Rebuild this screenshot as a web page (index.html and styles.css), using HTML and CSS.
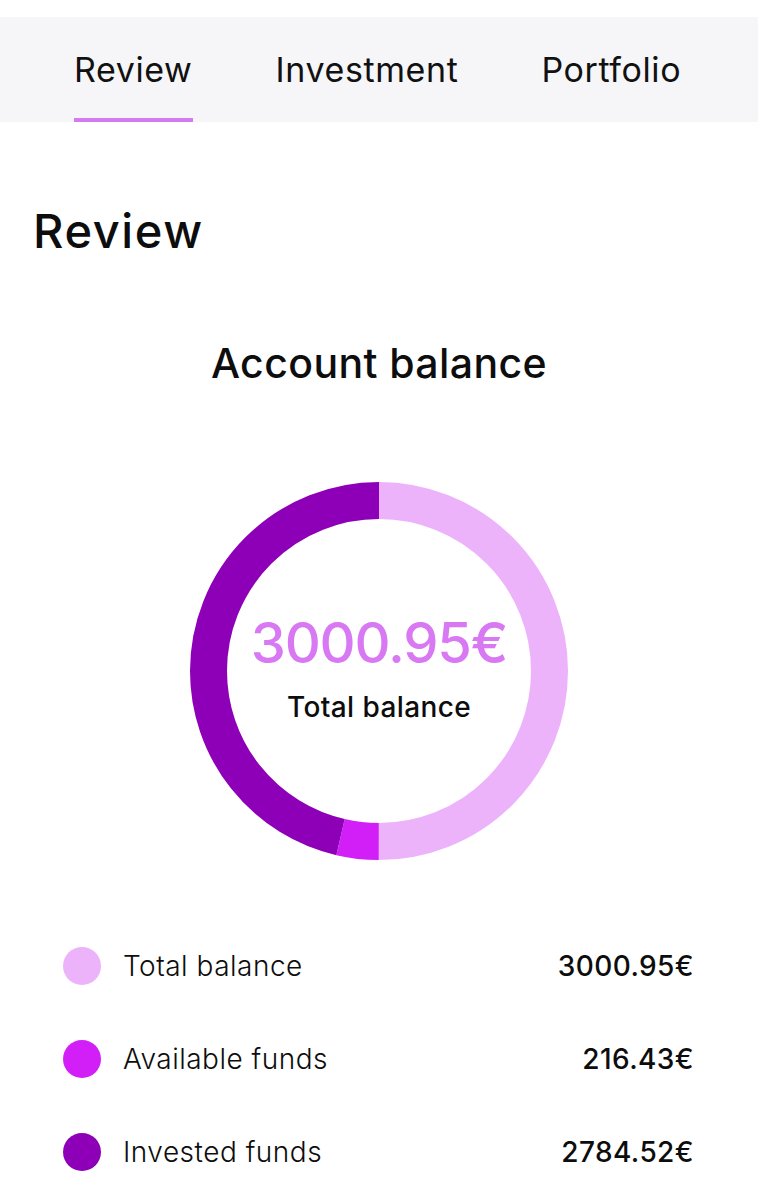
FILE: index.html
```html
<!DOCTYPE html>
<html lang="en">
<head>
<meta charset="utf-8">
<title>Review</title>
<link rel="stylesheet" href="styles.css">
</head>
<body>
<nav class="tabs">
  <div class="tab active">Review</div>
  <div class="tab">Investment</div>
  <div class="tab">Portfolio</div>
</nav>
<main>
  <h1 class="page-title">Review</h1>
  <h2 class="section-title">Account balance</h2>
  <div class="donut">
    <svg class="donut-svg" width="378" height="378" viewBox="0 0 378 378">
      <circle cx="189" cy="189" r="170.5" fill="none" stroke="#ecb3fb" stroke-width="37" stroke-dasharray="535.64 535.64" transform="rotate(-90 189 189)"/>
      <circle cx="189" cy="189" r="170.5" fill="none" stroke="#d21ff8" stroke-width="37" stroke-dasharray="38.63 1032.65" stroke-dashoffset="-535.64" transform="rotate(-90 189 189)"/>
      <circle cx="189" cy="189" r="170.5" fill="none" stroke="#8e00b8" stroke-width="37" stroke-dasharray="497.01 1071.28" stroke-dashoffset="-574.27" transform="rotate(-90 189 189)"/>
    </svg>
    <div class="donut-center">
      <div class="donut-amount">3000.95€</div>
      <div class="donut-label">Total balance</div>
    </div>
  </div>
  <ul class="legend">
    <li class="legend-row"><span class="dot dot-total"></span><span class="legend-label">Total balance</span><span class="legend-value">3000.95€</span></li>
    <li class="legend-row"><span class="dot dot-available"></span><span class="legend-label">Available funds</span><span class="legend-value">216.43€</span></li>
    <li class="legend-row"><span class="dot dot-invested"></span><span class="legend-label">Invested funds</span><span class="legend-value">2784.52€</span></li>
  </ul>
</main>
</body>
</html>
```
FILE: styles.css
```css
* { box-sizing: border-box; }
html, body { margin: 0; padding: 0; background: #ffffff; }
body {
  font-family: "Inter", "Noto Sans", sans-serif;
  color: #0d0d0d;
  width: 758px;
  height: 1200px;
  overflow: hidden;
}
.tabs {
  margin-top: 17px;
  height: 105px;
  background: #f6f6f8;
  display: flex;
  gap: 83px;
  padding-left: 74px;
}
.tab {
  font-size: 34px;
  line-height: 1;
  padding-top: 36px;
  height: 105px;
  border-bottom: 4px solid transparent;
  color: #111;
  letter-spacing: 0.6px;
}
.tab.active { border-bottom-color: #d67af0; }
main { display: flex; flex-direction: column; }
.page-title {
  margin: 85px 0 0 0;
  padding-left: 33px;
  font-size: 47px;
  line-height: 1;
  font-weight: 500;
  letter-spacing: 1.6px;
}
.section-title {
  margin: 89px 0 0 0;
  text-align: center;
  font-size: 41px;
  line-height: 1;
  font-weight: 500;
  letter-spacing: 0.4px;
}
.donut {
  margin: 98px auto 0 auto;
  width: 378px;
  height: 378px;
  display: grid;
}
.donut-svg, .donut-center { grid-area: 1 / 1; }
.donut-center {
  display: flex;
  flex-direction: column;
  align-items: center;
  padding-top: 133px;
}
.donut-amount {
  font-size: 56px;
  line-height: 1;
  color: #d878f2;
  font-weight: 500;
  letter-spacing: -1.2px;
}
.donut-label {
  margin-top: 22px;
  font-size: 28px;
  line-height: 1;
  font-weight: 500;
  letter-spacing: 0.4px;
}
.legend {
  list-style: none;
  margin: 59px 0 0 0;
  padding: 0 64px 0 63px;
}
.legend-row {
  height: 93px;
  display: flex;
  align-items: center;
}
.dot {
  width: 38px;
  height: 38px;
  border-radius: 50%;
  flex: none;
}
.dot-total { background: #ecb3fb; }
.dot-available { background: #d21ff8; }
.dot-invested { background: #8e00b8; }
.legend-label {
  margin-left: 22px;
  font-size: 28px;
  font-weight: 300;
  letter-spacing: 0.5px;
  flex: 1;
}
.legend-value {
  font-size: 28px;
  font-weight: 500;
  letter-spacing: 0.4px;
}
```
